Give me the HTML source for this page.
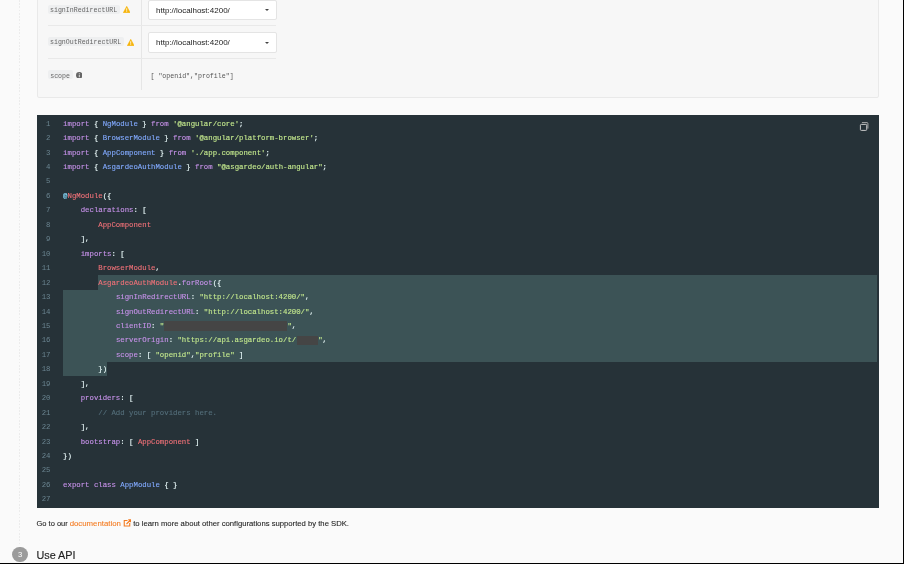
<!DOCTYPE html>
<html><head><meta charset="utf-8">
<style>
*{margin:0;padding:0;box-sizing:border-box}
html,body{width:904px;height:564px;overflow:hidden;background:#fafafa;font-family:"Liberation Sans",sans-serif}
.abs{position:absolute}
#rb{left:903px;top:0;width:1px;height:564px;background:#000}
#bb{left:0;top:562.5px;width:904px;height:1.5px;background:#000}
#dots{left:19.3px;top:0;width:1.1px;height:545px;background:repeating-linear-gradient(to bottom,#ececec 0,#ececec 1.7px,transparent 1.7px,transparent 3.23px)}
#panel{left:37px;top:-20px;width:842.3px;height:117.9px;background:#f7f7f7;border:1px solid #e9e9e9;border-radius:2px}
#coldiv{left:140.6px;top:0;width:1px;height:90px;background:#e6e6e6}
.sep{left:48px;width:228.3px;height:1px;background:#e9e9e9}
.chip{height:9px;background:#eeeff0;border-radius:2px;font-family:"Liberation Mono",monospace;font-size:6.6px;line-height:12.6px;color:#666;padding-left:2px}
.sel{left:148px;width:129px;background:#fff;border:1px solid #e4e4e4;border-radius:2px}
.seltxt{font-size:8px;color:#222;line-height:10px}
.caret{width:0;height:0;border-left:2.3px solid transparent;border-right:2.3px solid transparent;border-top:2.4px solid #444}
#code{left:37px;top:114.8px;width:842px;height:392.8px;background:#263238}
.ln{position:absolute;left:0;width:13.5px;text-align:right;font-family:"Liberation Mono",monospace;font-size:7.33px;color:#6a8490}
.cl{position:absolute;left:63.1px;white-space:pre;font-family:"Liberation Mono",monospace;font-size:7.33px;color:#eeffff;-webkit-text-stroke:0.12px currentColor}
.hl{position:absolute;background:#3c5356}
.k{color:#c792ea}.s{color:#c3e88d}.b{color:#82aaff}.r{color:#f07178}.c{color:#89ddff}.p{color:#eeffff}.cm{color:#546e7a}
.red{display:inline-block;background:#454545;height:9.7px;vertical-align:middle}
</style></head><body>
<div id="root" style="position:absolute;left:0;top:0;width:904px;height:564px;will-change:transform">
<div class="abs" id="dots"></div>
<div class="abs" id="panel"></div>
<div class="abs" id="coldiv"></div>
<div class="abs sep" style="top:25px"></div>
<div class="abs sep" style="top:58px"></div>

<div class="abs chip" style="left:48px;top:5px;width:71.5px">signInRedirectURL</div>
<svg class="abs" style="left:122.5px;top:6px" width="7.5" height="7" viewBox="0 0 15 14"><path d="M7.5 0.5 L14.6 13.5 L0.4 13.5 Z" fill="#f6b40a" stroke="#f6b40a" stroke-linejoin="round" stroke-width="1"/><rect x="6.7" y="4.5" width="1.6" height="5" fill="#fff"/><rect x="6.7" y="10.5" width="1.6" height="1.6" fill="#fff"/></svg>
<div class="abs sel" style="top:0px;height:20px"></div>
<div class="abs seltxt" style="left:156px;top:5.5px">http://localhost:4200/</div>
<div class="abs caret" style="left:264.6px;top:9.4px"></div>

<div class="abs chip" style="left:48px;top:37.3px;width:75.5px">signOutRedirectURL</div>
<svg class="abs" style="left:126.8px;top:38.5px" width="7.5" height="7" viewBox="0 0 15 14"><path d="M7.5 0.5 L14.6 13.5 L0.4 13.5 Z" fill="#f6b40a" stroke="#f6b40a" stroke-linejoin="round" stroke-width="1"/><rect x="6.7" y="4.5" width="1.6" height="5" fill="#fff"/><rect x="6.7" y="10.5" width="1.6" height="1.6" fill="#fff"/></svg>
<div class="abs sel" style="top:31.6px;height:21px"></div>
<div class="abs seltxt" style="left:156px;top:38px">http://localhost:4200/</div>
<div class="abs caret" style="left:264.6px;top:41.6px"></div>

<div class="abs chip" style="left:48.2px;top:69.7px;width:24.5px;line-height:14.3px">scope</div>
<svg class="abs" style="left:75.5px;top:71.5px" width="6.5" height="6.5" viewBox="0 0 13 13"><circle cx="6.5" cy="6.5" r="6.5" fill="#666"/><rect x="5.7" y="5.5" width="1.6" height="5" fill="#fff"/><rect x="5.7" y="2.6" width="1.6" height="1.6" fill="#fff"/></svg>
<div class="abs" style="left:150.5px;top:71.5px;font-family:'Liberation Mono',monospace;font-size:6.6px;line-height:9px;color:#555">[ "openid","profile"]</div>

<div class="abs" id="code">
<div class="hl" style="left:61.1px;top:160.10px;width:778.9px;height:14.80px"></div>
<div class="hl" style="left:26.1px;top:174.90px;width:813.9px;height:72.30px"></div>
<div class="hl" style="left:26.1px;top:247.20px;width:44px;height:13.80px"></div>
<div class="ln" style="top:1.90px;line-height:14.45px">1</div>
<div class="cl" style="left:26.1px;top:1.90px;line-height:14.45px"><span class="k">import</span><span class="p"> { </span><span class="b">NgModule</span><span class="p"> } </span><span class="k">from</span><span class="p"> </span><span class="s">'@angular/core'</span><span class="p">;</span></div>
<div class="ln" style="top:16.35px;line-height:14.45px">2</div>
<div class="cl" style="left:26.1px;top:16.35px;line-height:14.45px"><span class="k">import</span><span class="p"> { </span><span class="b">BrowserModule</span><span class="p"> } </span><span class="k">from</span><span class="p"> </span><span class="s">'@angular/platform-browser'</span><span class="p">;</span></div>
<div class="ln" style="top:30.80px;line-height:14.45px">3</div>
<div class="cl" style="left:26.1px;top:30.80px;line-height:14.45px"><span class="k">import</span><span class="p"> { </span><span class="b">AppComponent</span><span class="p"> } </span><span class="k">from</span><span class="p"> </span><span class="s">'./app.component'</span><span class="p">;</span></div>
<div class="ln" style="top:45.25px;line-height:14.45px">4</div>
<div class="cl" style="left:26.1px;top:45.25px;line-height:14.45px"><span class="k">import</span><span class="p"> { </span><span class="b">AsgardeoAuthModule</span><span class="p"> } </span><span class="k">from</span><span class="p"> </span><span class="s">"@asgardeo/auth-angular"</span><span class="p">;</span></div>
<div class="ln" style="top:59.70px;line-height:14.45px">5</div>
<div class="ln" style="top:74.15px;line-height:14.45px">6</div>
<div class="cl" style="left:26.1px;top:74.15px;line-height:14.45px"><span class="c">@</span><span class="r">NgModule</span><span class="p">({</span></div>
<div class="ln" style="top:88.60px;line-height:14.45px">7</div>
<div class="cl" style="left:26.1px;top:88.60px;line-height:14.45px"><span class="p">    </span><span class="k">declarations</span><span class="p">: [</span></div>
<div class="ln" style="top:103.05px;line-height:14.45px">8</div>
<div class="cl" style="left:26.1px;top:103.05px;line-height:14.45px"><span class="p">        </span><span class="r">AppComponent</span></div>
<div class="ln" style="top:117.50px;line-height:14.45px">9</div>
<div class="cl" style="left:26.1px;top:117.50px;line-height:14.45px"><span class="p">    ],</span></div>
<div class="ln" style="top:131.95px;line-height:14.45px">10</div>
<div class="cl" style="left:26.1px;top:131.95px;line-height:14.45px"><span class="p">    </span><span class="k">imports</span><span class="p">: [</span></div>
<div class="ln" style="top:146.40px;line-height:14.45px">11</div>
<div class="cl" style="left:26.1px;top:146.40px;line-height:14.45px"><span class="p">        </span><span class="r">BrowserModule</span><span class="p">,</span></div>
<div class="ln" style="top:160.85px;line-height:14.45px">12</div>
<div class="cl" style="left:26.1px;top:160.85px;line-height:14.45px"><span class="p">        </span><span class="r">AsgardeoAuthModule</span><span class="p">.</span><span class="k">forRoot</span><span class="p">({</span></div>
<div class="ln" style="top:175.30px;line-height:14.45px">13</div>
<div class="cl" style="left:26.1px;top:175.30px;line-height:14.45px"><span class="p">            </span><span class="k">signInRedirectURL</span><span class="p">: </span><span class="s">"http://localhost:4200/"</span><span class="p">,</span></div>
<div class="ln" style="top:189.75px;line-height:14.45px">14</div>
<div class="cl" style="left:26.1px;top:189.75px;line-height:14.45px"><span class="p">            </span><span class="k">signOutRedirectURL</span><span class="p">: </span><span class="s">"http://localhost:4200/"</span><span class="p">,</span></div>
<div class="ln" style="top:204.20px;line-height:14.45px">15</div>
<div class="cl" style="left:26.1px;top:204.20px;line-height:14.45px"><span class="p">            </span><span class="k">clientID</span><span class="p">: </span><span class="s">"</span><span class="red" style="width:123.2px"></span><span class="s">"</span><span class="p">,</span></div>
<div class="ln" style="top:218.65px;line-height:14.45px">16</div>
<div class="cl" style="left:26.1px;top:218.65px;line-height:14.45px"><span class="p">            </span><span class="k">serverOrigin</span><span class="p">: </span><span class="s">"https://api.asgardeo.io/t/</span><span class="red" style="width:21.2px;margin-left:0.8px"></span><span class="s">"</span><span class="p">,</span></div>
<div class="ln" style="top:233.10px;line-height:14.45px">17</div>
<div class="cl" style="left:26.1px;top:233.10px;line-height:14.45px"><span class="p">            </span><span class="k">scope</span><span class="p">: [ </span><span class="s">"openid"</span><span class="p">,</span><span class="s">"profile"</span><span class="p"> ]</span></div>
<div class="ln" style="top:247.55px;line-height:14.45px">18</div>
<div class="cl" style="left:26.1px;top:247.55px;line-height:14.45px"><span class="p">        })</span></div>
<div class="ln" style="top:262.00px;line-height:14.45px">19</div>
<div class="cl" style="left:26.1px;top:262.00px;line-height:14.45px"><span class="p">    ],</span></div>
<div class="ln" style="top:276.45px;line-height:14.45px">20</div>
<div class="cl" style="left:26.1px;top:276.45px;line-height:14.45px"><span class="p">    </span><span class="k">providers</span><span class="p">: [</span></div>
<div class="ln" style="top:290.90px;line-height:14.45px">21</div>
<div class="cl" style="left:26.1px;top:290.90px;line-height:14.45px"><span class="p">        </span><span class="cm">// Add your providers here.</span></div>
<div class="ln" style="top:305.35px;line-height:14.45px">22</div>
<div class="cl" style="left:26.1px;top:305.35px;line-height:14.45px"><span class="p">    ],</span></div>
<div class="ln" style="top:319.80px;line-height:14.45px">23</div>
<div class="cl" style="left:26.1px;top:319.80px;line-height:14.45px"><span class="p">    </span><span class="k">bootstrap</span><span class="p">: [ </span><span class="r">AppComponent</span><span class="p"> ]</span></div>
<div class="ln" style="top:334.25px;line-height:14.45px">24</div>
<div class="cl" style="left:26.1px;top:334.25px;line-height:14.45px"><span class="p">})</span></div>
<div class="ln" style="top:348.70px;line-height:14.45px">25</div>
<div class="ln" style="top:363.15px;line-height:14.45px">26</div>
<div class="cl" style="left:26.1px;top:363.15px;line-height:14.45px"><span class="k">export</span><span class="p"> </span><span class="k">class</span><span class="p"> </span><span class="b">AppModule</span><span class="p"> { }</span></div>
<div class="ln" style="top:377.60px;line-height:14.45px">27</div>
</div>

<div class="abs" style="left:36.5px;top:518.6px;font-size:7.5px;line-height:10px;color:#1e1e1e;-webkit-text-stroke:0.1px #1e1e1e;white-space:nowrap">Go to our</div>
<div class="abs" style="left:69.7px;top:518.6px;font-size:7.8px;line-height:10px;color:#f47b20;-webkit-text-stroke:0.1px #f47b20;white-space:nowrap">documentation</div>
<svg class="abs" style="left:123px;top:518.8px" width="8.4" height="8" viewBox="0 0 16.8 16"><path d="M9 3 H2.5 V14 H13.5 V8" fill="none" stroke="#f47b20" stroke-width="2.2"/><path d="M7 10 L15 2 M10.5 1.5 H15.3 V6.3" fill="none" stroke="#f47b20" stroke-width="2.2"/></svg>
<div class="abs" style="left:133.2px;top:518.6px;font-size:7.7px;line-height:10px;color:#1e1e1e;-webkit-text-stroke:0.1px #1e1e1e;white-space:nowrap">to learn more about other configurations supported by the SDK.</div>

<div class="abs" style="left:12.3px;top:546.6px;width:15.6px;height:15.6px;border-radius:50%;background:#9b9b9b;color:#fff;font-size:7.6px;line-height:16.4px;text-align:center">3</div>
<div class="abs" style="left:36.5px;top:547.6px;font-size:10.8px;line-height:14px;color:#1e1e1e;-webkit-text-stroke:0.15px #1e1e1e">Use API</div>

<svg class="abs" style="left:855px;top:118px" width="20" height="18" viewBox="0 0 20 18"><rect x="5.4" y="6.4" width="6.3" height="6" rx="0.9" fill="none" stroke="#d0d0d0" stroke-width="0.95"/><path d="M6.9 4.6 H12 Q12.9 4.6 12.9 5.5 V10.6" fill="none" stroke="#b8b8b8" stroke-width="0.9"/></svg>
<div class="abs" id="rb"></div>
<div class="abs" id="bb"></div>
</div>
</body></html>
